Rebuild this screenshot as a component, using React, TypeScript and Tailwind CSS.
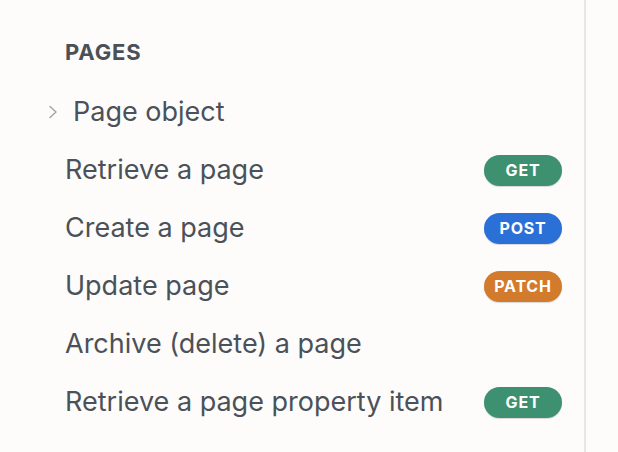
import React from "react";

type Method = "GET" | "POST" | "PATCH";

const badgeClass: Record<Method, string> = {
  GET: "bg-[#3d9171]",
  POST: "bg-[#2a70d6]",
  PATCH: "bg-[#d37b2c]",
};

function Badge({ m }: { m: Method }) {
  return (
    <span
      className={`${badgeClass[m]} flex h-[31px] w-[78px] items-center justify-center rounded-full text-[16px] font-bold tracking-[0.05em] text-white shadow-[0_1px_1px_rgba(0,0,0,0.15)]`}
    >
      {m}
    </span>
  );
}

const items: { label: string; method?: Method; chevron?: boolean }[] = [
  { label: "Page object", chevron: true },
  { label: "Retrieve a page", method: "GET" },
  { label: "Create a page", method: "POST" },
  { label: "Update page", method: "PATCH" },
  { label: "Archive (delete) a page" },
  { label: "Retrieve a page property item", method: "GET" },
];

export default function App() {
  return (
    <div
      className="flex h-[452px] w-[618px] overflow-hidden bg-[#fdfcfb]"
      style={{ fontFamily: "Inter, 'Noto Sans', sans-serif" }}
    >
      <div className="w-[586px] shrink-0 border-r-2 border-[#e8e6e3] pt-[37px]">
        <div className="pl-[65px] text-[22px] font-bold leading-[30px] tracking-[0.04em] text-[#4b5057]">
          PAGES
        </div>
        <div className="mt-[16px]">
          {items.map((it) => (
            <div key={it.label} className="flex h-[58px] items-center pr-[22px]">
              <div className="relative flex flex-1 items-center pl-[65px]">
                {it.chevron && (
                  <svg
                    className="absolute left-[47px] top-1/2 -translate-y-1/2"
                    width="12"
                    height="16"
                    viewBox="0 0 12 16"
                    fill="none"
                  >
                    <path d="M3 2.5 L9 8 L3 13.5" stroke="#a3a3a3" strokeWidth="1.4" strokeLinecap="round" strokeLinejoin="round" />
                  </svg>
                )}
                <span
                  className={`${it.chevron ? "ml-[8px]" : ""} text-[27px] leading-[32px] text-[#4b5159]`}
                >
                  {it.label}
                </span>
              </div>
              {it.method && <Badge m={it.method} />}
            </div>
          ))}
        </div>
      </div>
      <div className="flex-1" />
    </div>
  );
}
